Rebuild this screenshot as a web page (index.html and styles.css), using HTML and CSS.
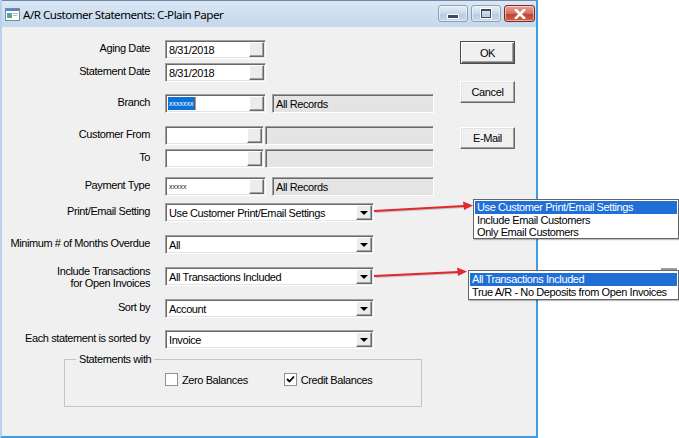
FILE: index.html
```html
<!DOCTYPE html>
<html>
<head>
<meta charset="utf-8">
<link rel="stylesheet" href="styles.css">
</head>
<body>
<div class="stage">
  <div class="window">
    <div class="titlebar">
      <svg class="appicon" width="15" height="13" viewBox="0 0 15 13">
        <rect x="0.5" y="0.5" width="14" height="12" fill="#fff" stroke="#7a8a9c"/>
        <rect x="1" y="1" width="13" height="2" fill="#4f86c6"/>
        <rect x="2" y="5" width="5" height="5" fill="#5aa0d8"/>
        <rect x="3" y="7" width="3" height="3" fill="#4caf50"/>
        <rect x="8" y="5" width="5" height="1" fill="#b0b8c4"/>
        <rect x="8" y="7" width="4" height="1" fill="#b0b8c4"/>
      </svg>
      <span class="title">A/R Customer Statements: C-Plain Paper</span>
      <div class="caps">
        <div class="cap cap-min"><span class="minbar"></span></div>
        <div class="cap cap-max"><span class="maxbox"></span></div>
        <div class="cap cap-close">
          <svg width="12" height="10" viewBox="0 0 12 10"><path d="M2 1 L10 9 M10 1 L2 9" stroke="#fff" stroke-width="2.6" stroke-linecap="square"/></svg>
        </div>
      </div>
    </div>
    <div class="client">
      <div class="form">
        <div class="row r-aging">
          <div class="lbl">Aging Date</div>
          <div class="input"><span class="val">8/31/2018</span><span class="lk"></span></div>
        </div>
        <div class="row g4">
          <div class="lbl">Statement Date</div>
          <div class="input"><span class="val">8/31/2018</span><span class="lk"></span></div>
        </div>
        <div class="row g12">
          <div class="lbl">Branch</div>
          <div class="input"><span class="sel">xxxxxxx</span><span class="caret"></span><span class="lk"></span></div>
          <div class="gray">All Records</div>
        </div>
        <div class="row g13">
          <div class="lbl">Customer From</div>
          <div class="input narrow"><span class="lk"></span></div>
          <div class="gray wide"></div>
        </div>
        <div class="row g4">
          <div class="lbl">To</div>
          <div class="input narrow"><span class="lk"></span></div>
          <div class="gray wide"></div>
        </div>
        <div class="row g9">
          <div class="lbl">Payment Type</div>
          <div class="input"><span class="tiny">xxxxx</span><span class="lk"></span></div>
          <div class="gray">All Records</div>
        </div>
        <div class="row g7">
          <div class="lbl">Print/Email Setting</div>
          <div class="combo"><span class="val">Use Customer Print/Email Settings</span><span class="drop"></span></div>
        </div>
        <div class="row g13">
          <div class="lbl">Minimum # of Months Overdue</div>
          <div class="combo"><span class="val">All</span><span class="drop"></span></div>
        </div>
        <div class="row g13">
          <div class="lbl two">Include Transactions<br>for Open Invoices</div>
          <div class="combo"><span class="val">All Transactions Included</span><span class="drop"></span></div>
        </div>
        <div class="row g13">
          <div class="lbl">Sort by</div>
          <div class="combo"><span class="val">Account</span><span class="drop"></span></div>
        </div>
        <div class="row g12">
          <div class="lbl">Each statement is sorted by</div>
          <div class="combo"><span class="val">Invoice</span><span class="drop"></span></div>
        </div>
        <fieldset class="group">
          <legend>Statements with</legend>
          <div class="checks">
            <label class="chk"><span class="box"></span>Zero Balances</label>
            <label class="chk chk2"><span class="box"><svg width="9" height="9" viewBox="0 0 9 9"><path d="M1 4 L3.5 6.5 L8 1.5" fill="none" stroke="#000" stroke-width="1.8"/></svg></span>Credit Balances</label>
          </div>
        </fieldset>
      </div>
      <div class="buttons">
        <div class="btn btn-default">OK</div>
        <div class="btn btn-cancel">Cancel</div>
        <div class="btn btn-mail">E-Mail</div>
      </div>
    </div>
  </div>

  <div class="popup pop1">
    <div class="item hl">Use Customer Print/Email Settings</div>
    <div class="item">Include Email Customers</div>
    <div class="item">Only Email Customers</div>
  </div>
  <div class="popup pop2">
    <span class="pop2bar"></span>
    <div class="item hl">All Transactions Included</div>
    <div class="item">True A/R - No Deposits from Open Invoices</div>
  </div>

  <svg class="arrows" width="679" height="438" viewBox="0 0 679 438">
    <g stroke="rgba(0,0,0,0.18)" stroke-width="2" fill="rgba(0,0,0,0.18)">
      <line x1="375" y1="212" x2="465" y2="207"/>
      <line x1="375" y1="277" x2="459" y2="273"/>
    </g>
    <g stroke="#e0282e" stroke-width="2" fill="#e0282e">
      <line x1="374" y1="211" x2="464" y2="206"/>
      <path d="M473 205.5 L463 201.5 L464 210 Z" stroke="none"/>
      <line x1="374" y1="276" x2="458" y2="272"/>
      <path d="M467 271.5 L457 267.5 L458 276 Z" stroke="none"/>
    </g>
  </svg>
</div>
</body>
</html>
```
FILE: styles.css
```css
body {
  margin: 0;
  font-family: "Liberation Sans", Arial, sans-serif;
  font-size: 11px;
  letter-spacing: -0.4px;
  color: #000;
  background: #fff;
}

.stage {
  position: relative;
  width: 679px;
  height: 438px;
  background: #fff;
  overflow: hidden;
}

.window {
  width: 538px;
  height: 438px;
  box-sizing: border-box;
  display: flex;
  flex-direction: column;
  background: #f0f0f0;
  border-left: 2px solid #b9d1ea;
  border-right: 2px solid #3f9be2;
  border-bottom: 2px solid #3f9be2;
}

.titlebar {
  height: 27px;
  box-sizing: border-box;
  border-top: 1px solid #7088a4;
  background: linear-gradient(#dbe7f4, #c3d7ec);
  display: flex;
  align-items: center;
  padding-left: 3px;
  padding-right: 1px;
}

.appicon { flex: none; }

.title {
  font-family: "Noto Sans", "Open Sans", sans-serif;
  font-size: 11.6px;
  letter-spacing: -0.5px;
  margin-left: 3px;
  color: #000;
}

.caps {
  margin-left: auto;
  display: flex;
  gap: 3px;
  align-self: flex-start;
  margin-top: 4px;
}

.cap {
  height: 17px;
  box-sizing: border-box;
  border: 1px solid #8ba0b8;
  border-radius: 3px;
  display: flex;
  align-items: center;
  justify-content: center;
  background: linear-gradient(#e6eef7, #c9d8e9 50%, #b9cbe0 51%, #c8d8ea);
  box-shadow: inset 0 0 0 1px rgba(255,255,255,0.5);
}

.cap-min { width: 30px; }
.cap-max { width: 30px; }
.cap-close {
  width: 31px;
  border-color: #7a2b25;
  background: linear-gradient(#e8a493, #d2705f 50%, #c0402f 51%, #d0604c);
}

.minbar {
  width: 10px;
  height: 3px;
  background: #3b4a5c;
  border: 1px solid #fff;
  margin-top: 5px;
}

.maxbox {
  width: 8px;
  height: 6px;
  border: 1px solid #3b4a5c;
  border-top-width: 2px;
  box-shadow: 0 0 0 1px #fff;
}

.client {
  flex: 1;
  display: flex;
}

.form {
  width: 458px;
  flex: none;
}

.row {
  display: flex;
  align-items: center;
  height: 19px;
}

.r-aging { margin-top: 13px; }
.g4 { margin-top: 4px; }
.g7 { margin-top: 7px; }
.g9 { margin-top: 9px; }
.g12 { margin-top: 12px; }
.g13 { margin-top: 13px; }

.lbl {
  width: 148px;
  margin-right: 15px;
  text-align: right;
  flex: none;
  line-height: 13px;
  position: relative;
  top: -1px;
  white-space: nowrap;
}

.lbl.two { line-height: 12px; top: 0; }

.input, .combo, .gray {
  height: 19px;
  box-sizing: border-box;
  border: 1px solid;
  border-color: #a0a0a0 #fff #fff #a0a0a0;
  box-shadow: inset 1px 1px 0 #696969, inset -1px -1px 0 #e3e3e3;
  background: #fff;
  display: flex;
  align-items: center;
  flex: none;
}

.input {
  width: 101px;
  padding-left: 2px;
}

.input.narrow { width: 99px; }

.val {
  padding-left: 1px;
  white-space: nowrap;
}

.lk {
  margin-left: auto;
  width: 15px;
  height: 15px;
  box-sizing: border-box;
  background: #ececec;
  border: 1px solid;
  border-color: #fff #696969 #696969 #fff;
  box-shadow: inset -1px -1px 0 #a0a0a0;
  margin-right: 1px;
  flex: none;
}

.sel {
  background: #0a72d6;
  color: #fff;
  font-size: 7px;
  letter-spacing: 0;
  height: 13px;
  line-height: 13px;
  padding: 0 1px;
}

.caret {
  width: 1px;
  height: 13px;
  background: #e88a2c;
}

.tiny {
  font-size: 7px;
  letter-spacing: 0;
  padding-left: 1px;
  color: #222;
}

.gray {
  width: 162px;
  margin-left: 6px;
  background: #e4e4e4;
  padding-left: 3px;
}

.gray.wide {
  width: 169px;
  margin-left: 1px;
}

.combo {
  width: 209px;
  padding-left: 2px;
}

.drop {
  margin-left: auto;
  margin-right: 1px;
  width: 16px;
  height: 15px;
  box-sizing: border-box;
  background: #ececec;
  border: 1px solid;
  border-color: #fff #696969 #696969 #fff;
  box-shadow: inset -1px -1px 0 #a0a0a0;
  display: flex;
  align-items: center;
  justify-content: center;
  flex: none;
}

.drop::after {
  content: "";
  border-left: 4px solid transparent;
  border-right: 4px solid transparent;
  border-top: 4px solid #000;
  margin-top: 1px;
}

.group {
  margin: 4px 0 0 62px;
  width: 358px;
  height: 54px;
  box-sizing: border-box;
  border: 1px solid #c4c4c4;
  padding: 0;
}

.group legend {
  margin-left: 11px;
  padding: 0 3px;
  line-height: 13px;
}

.checks {
  display: flex;
  margin-top: 7px;
  padding-left: 100px;
}

.chk {
  display: flex;
  align-items: center;
  height: 13px;
}

.chk2 { margin-left: 36px; }

.box {
  width: 13px;
  height: 13px;
  box-sizing: border-box;
  border: 1px solid #8f8f8f;
  background: #fff;
  margin-right: 4px;
  display: flex;
  align-items: center;
  justify-content: center;
}

.buttons {
  display: flex;
  flex-direction: column;
  align-items: flex-start;
}

.btn {
  width: 55px;
  height: 22px;
  box-sizing: border-box;
  background: #f0f0f0;
  border: 1px solid;
  border-color: #fff #696969 #696969 #fff;
  box-shadow: inset -1px -1px 0 #a0a0a0, inset 1px 1px 0 #e3e3e3;
  display: flex;
  align-items: center;
  justify-content: center;
}

.btn-default {
  height: 23px;
  margin-top: 14px;
  border: 1px solid #4a4a4a;
  box-shadow: inset 1px 1px 0 #fff, inset -1px -1px 0 #696969, inset -2px -2px 0 #a0a0a0;
}

.btn-cancel { margin-top: 17px; }
.btn-mail { margin-top: 24px; }

.popup {
  position: absolute;
  background: #fff;
  border: 1px solid #646464;
  box-sizing: border-box;
  box-shadow: 1px 1px 1px rgba(0,0,0,0.25);
}

.pop1 {
  left: 473px;
  top: 199px;
  width: 206px;
  height: 40px;
  padding: 1px;
}

.pop2 {
  left: 468px;
  top: 270px;
  width: 211px;
  height: 30px;
  padding: 2px 1px 1px 1px;
}

.pop2bar {
  position: absolute;
  right: 1px;
  top: -3px;
  width: 16px;
  height: 2px;
  background: #9a9a9a;
}

.item {
  height: 12.5px;
  line-height: 12.5px;
  padding-left: 2px;
  white-space: nowrap;
}

.item.hl {
  background: #1f6fd6;
  color: #fff;
}

.arrows {
  position: absolute;
  left: 0;
  top: 0;
  pointer-events: none;
}
```
